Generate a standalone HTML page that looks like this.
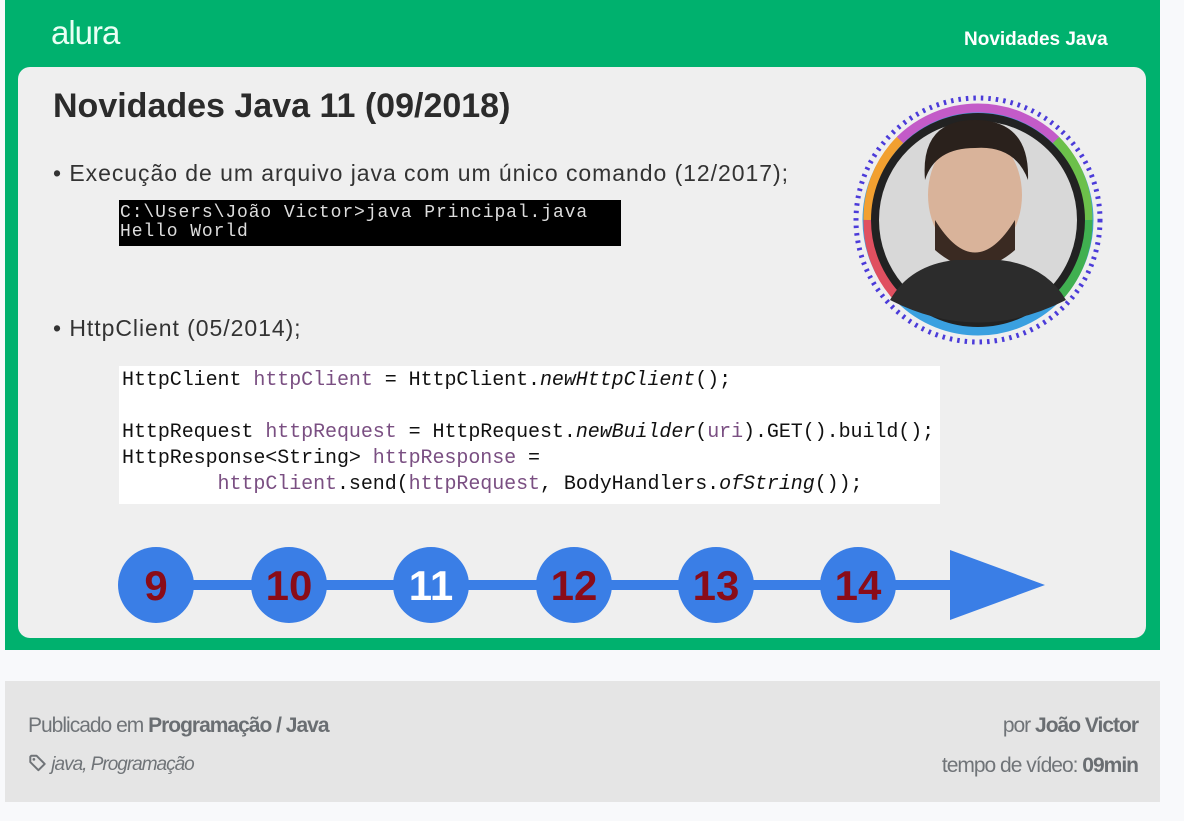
<!DOCTYPE html>
<html><head><meta charset="utf-8"><style>
*{margin:0;padding:0;box-sizing:border-box}
body{width:1184px;height:821px;background:#f8f9fb;font-family:"Liberation Sans",sans-serif;position:relative;overflow:hidden}
.abs{position:absolute}
#video{left:5px;top:0;width:1155px;height:650px;background:#00b16e}
#card{left:18px;top:67px;width:1128px;height:571px;background:#efefef;border-radius:12px}
.mono{font-family:"Liberation Mono",monospace}
#foot{left:5px;top:681px;width:1155px;height:121px;background:#e5e5e5;color:#707478;font-size:21px;letter-spacing:-1px}
#foot b{color:#6a6e72}
</style></head><body>
<div id="video" class="abs">
 <div class="abs" style="left:46px;top:14px;color:#e8fff4;font-size:33px;letter-spacing:-1px">alura</div>
 <div class="abs" style="left:959px;top:29px;color:#fff;font-size:19px;font-weight:bold">Novidades Java</div>
</div>
<div id="card" class="abs"></div>
<div class="abs" style="left:53px;top:87px;font-size:34px;font-weight:bold;color:#2b2b2b">Novidades Java 11 (09/2018)</div>
<div class="abs" style="left:53px;top:160px;font-size:23px;color:#333;letter-spacing:0.95px">• Execução de um arquivo java com um único comando (12/2017);</div>
<div class="abs mono" style="left:119px;top:200px;width:502px;height:46px;background:#000;color:#ddd;font-size:18px;line-height:19px;padding:4px 0 0 1px;letter-spacing:0.9px">C:\Users\João Victor&gt;java Principal.java<br>Hello World</div>
<div class="abs" style="left:53px;top:315px;font-size:23px;color:#333;letter-spacing:0.95px">• HttpClient (05/2014);</div>
<div class="abs mono" style="left:119px;top:366px;width:821px;height:138px;background:#fff;color:#111;font-size:20px;line-height:26px;padding:2px 0 0 3px;white-space:pre;letter-spacing:-0.06px">HttpClient <span style="color:#7a4f82">httpClient</span> = HttpClient.<i>newHttpClient</i>();

HttpRequest <span style="color:#7a4f82">httpRequest</span> = HttpRequest.<i>newBuilder</i>(<span style="color:#7a4f82">uri</span>).GET().build();
HttpResponse&lt;String&gt; <span style="color:#7a4f82">httpResponse</span> =
        <span style="color:#7a4f82">httpClient</span>.send(<span style="color:#7a4f82">httpRequest</span>, BodyHandlers.<i>ofString</i>());</div>
<svg class="abs" style="left:0;top:0" width="1184" height="821">
 <circle cx="978" cy="220" r="122" fill="none" stroke="#4b3bd9" stroke-width="5" stroke-dasharray="2.5 5"/>
 <circle cx="978" cy="220" r="111" fill="none" stroke="#3aa0e0" stroke-width="9"/>
 <path d="M900 140 A111 111 0 0 1 1056 140" fill="none" stroke="#c35bc8" stroke-width="9"/>
 <path d="M868 220 A111 111 0 0 1 900 140" fill="none" stroke="#f2a030" stroke-width="9"/>
 <path d="M1088 220 A111 111 0 0 0 1056 140" fill="none" stroke="#6cc04a" stroke-width="9"/>
 <path d="M868 220 A111 111 0 0 0 900 300" fill="none" stroke="#e05060" stroke-width="9"/>
 <path d="M1088 220 A111 111 0 0 1 1056 300" fill="none" stroke="#40b050" stroke-width="9"/>
 <circle cx="978" cy="220" r="103" fill="#d8d8d8" stroke="#222" stroke-width="8"/>
 <ellipse cx="975" cy="195" rx="47" ry="62" fill="#d9b39a"/>
 <path d="M925 180 Q920 120 975 120 Q1030 120 1028 180 Q1015 145 975 148 Q935 148 925 180Z" fill="#2a211c"/>
 <path d="M935 220 Q975 285 1015 220 L1015 250 Q975 285 935 250Z" fill="#3a2a22"/>
 <path d="M890 300 Q910 265 955 260 L1000 260 Q1045 265 1066 300 Q978 345 890 300Z" fill="#2c2c2c"/>
 <line x1="155" y1="585" x2="955" y2="585" stroke="#3a7ee6" stroke-width="10"/>
 <path d="M950 550 L1045 585 L950 620Z" fill="#3a7ee6"/>
 <g fill="#3a7ee6">
  <circle cx="156" cy="585" r="38"/><circle cx="289" cy="585" r="38"/><circle cx="431" cy="585" r="38"/>
  <circle cx="574" cy="585" r="38"/><circle cx="716" cy="585" r="38"/><circle cx="858" cy="585" r="38"/>
 </g>
 <g font-family="Liberation Sans" font-weight="bold" font-size="42" text-anchor="middle" fill="#8a0c18">
  <text x="156" y="600">9</text><text x="289" y="600">10</text><text x="431" y="600" fill="#fff">11</text>
  <text x="574" y="600">12</text><text x="716" y="600">13</text><text x="858" y="600">14</text>
 </g>
</svg>
<div id="foot" class="abs">
 <div class="abs" style="left:23px;top:33px">Publicado em <b>Programação / Java</b></div>
 <div class="abs" style="right:22px;top:33px">por <b>João Victor</b></div>
 <div class="abs" style="left:23px;top:73px;font-size:19px;font-style:italic">
  <svg width="19" height="18" viewBox="0 0 20 20" style="vertical-align:-2px"><path d="M2 3 L2 9 L11 18 L18 11 L9 2 L3 2Z" fill="none" stroke="#707478" stroke-width="2.2" stroke-linejoin="round"/><circle cx="6" cy="6" r="1.5" fill="#707478"/></svg> java, Programação</div>
 <div class="abs" style="right:22px;top:73px">tempo de vídeo: <b>09min</b></div>
</div>
</body></html>
